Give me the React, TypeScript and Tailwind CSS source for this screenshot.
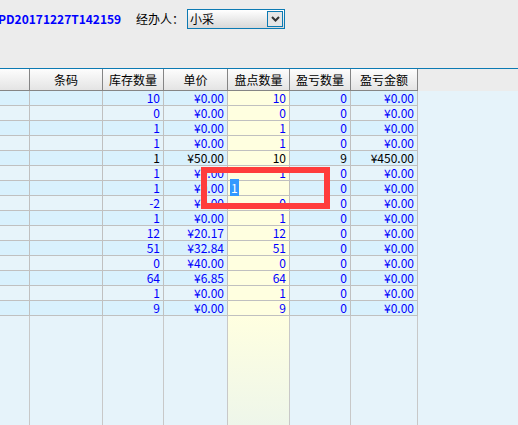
import React from "react";

type Row = { stock: string; price: string; count: string; diff: string; amount: string; dark?: boolean; editing?: boolean };

const ROWS: Row[] = [
  { stock: "10", price: "¥0.00", count: "10", diff: "0", amount: "¥0.00" },
  { stock: "0", price: "¥0.00", count: "0", diff: "0", amount: "¥0.00" },
  { stock: "1", price: "¥0.00", count: "1", diff: "0", amount: "¥0.00" },
  { stock: "1", price: "¥0.00", count: "1", diff: "0", amount: "¥0.00" },
  { stock: "1", price: "¥50.00", count: "10", diff: "9", amount: "¥450.00", dark: true },
  { stock: "1", price: "¥0.00", count: "1", diff: "0", amount: "¥0.00" },
  { stock: "1", price: "¥0.00", count: "1", diff: "0", amount: "¥0.00", editing: true },
  { stock: "-2", price: "¥0.00", count: "0", diff: "0", amount: "¥0.00" },
  { stock: "1", price: "¥0.00", count: "1", diff: "0", amount: "¥0.00" },
  { stock: "12", price: "¥20.17", count: "12", diff: "0", amount: "¥0.00" },
  { stock: "51", price: "¥32.84", count: "51", diff: "0", amount: "¥0.00" },
  { stock: "0", price: "¥40.00", count: "0", diff: "0", amount: "¥0.00" },
  { stock: "64", price: "¥6.85", count: "64", diff: "0", amount: "¥0.00" },
  { stock: "1", price: "¥0.00", count: "1", diff: "0", amount: "¥0.00" },
  { stock: "9", price: "¥0.00", count: "9", diff: "0", amount: "¥0.00" },
];

const FONT = { fontFamily: '"Noto Sans CJK SC", "Noto Sans", sans-serif' };

function HeadCell({ w, children }: { w: string; children?: React.ReactNode }) {
  return (
    <div className={`${w} flex items-center justify-center border-r border-[#858585] bg-gradient-to-b from-[#fdfdfd] to-[#e4e4e4] text-[12px] text-black`}>
      {children}
    </div>
  );
}

export default function App() {
  return (
    <div className="relative flex h-[425px] w-[518px] flex-col overflow-hidden bg-[#ececec]" style={FONT}>
      {/* top form */}
      <div className="flex h-[68px] items-start pt-[9px]">
        <span className="ml-[-2px] mt-[2px] w-[138px] text-[12px] font-bold leading-[16px] text-[#0000ff]">PD20171227T142159</span>
        <span className="mt-[2px] w-[51px] text-[12px] leading-[16px] text-black">经办人：</span>
        <div className="flex h-[20px] w-[98px] items-center border border-[#0c7ab3] bg-gradient-to-b from-white to-[#d8d8d8] pl-[2px]">
          <span className="flex-1 text-[12px] leading-[14px] text-black">小采</span>
          <div className="mr-px flex h-[16px] w-[16px] items-center justify-center border border-[#0c7ab3] bg-[#e6e6e6]">
            <svg width="9" height="6" viewBox="0 0 9 6">
              <path d="M1 1 L4.5 4.5 L8 1" fill="none" stroke="#333" strokeWidth="2" />
            </svg>
          </div>
        </div>
      </div>

      {/* grid */}
      <div className="flex flex-1 flex-col border-t border-[#0c7ab3]">
        <div className="flex h-[22px] shrink-0">
          <div className="flex border-b border-[#858585]">
            <HeadCell w="w-[30px]" />
            <HeadCell w="w-[73px]">条码</HeadCell>
            <HeadCell w="w-[61px]">库存数量</HeadCell>
            <HeadCell w="w-[64px]">单价</HeadCell>
            <HeadCell w="w-[62px]">盘点数量</HeadCell>
            <HeadCell w="w-[61px]">盈亏数量</HeadCell>
            <HeadCell w="w-[67px]">盈亏金额</HeadCell>
          </div>
          <div className="flex-1 bg-[#ececec]" />
        </div>

        <div className="flex flex-1 flex-col bg-[#e6f3fa]">
          {ROWS.map((r, i) => {
            const bg = i % 2 === 0 ? "bg-[#d9f1fd]" : "bg-[#e7f4fa]";
            const txt = r.dark ? "text-black" : "text-[#0000ff]";
            const base = `border-r border-b border-[#c0c0c0] text-[12px] leading-[14px] ${txt}`;
            const cell = `${base} pr-[3px] text-right`;
            return (
              <div key={i} className="flex h-[15px] shrink-0">
                <div className={`w-[30px] ${bg} ${cell}`} />
                <div className={`w-[73px] ${bg} ${cell}`} />
                <div className={`w-[61px] ${bg} ${cell}`}>{r.stock}</div>
                <div className={`w-[64px] ${bg} ${cell}`}>{r.price}</div>
                {r.editing ? (
                  <div className={`w-[62px] bg-[#ffffe0] ${base} pl-[2px] text-left`}>
                    <span className="bg-[#3399ff] px-px text-white">1</span>
                  </div>
                ) : (
                  <div className={`w-[62px] bg-[#ffffe0] ${cell}`}>{r.count}</div>
                )}
                <div className={`w-[61px] ${bg} ${cell}`}>{r.diff}</div>
                <div className={`w-[67px] ${bg} ${cell}`}>{r.amount}</div>
              </div>
            );
          })}
          <div className="flex flex-1">
            <div className="w-[30px] border-r border-[#c8c8c8]" />
            <div className="w-[73px] border-r border-[#c8c8c8]" />
            <div className="w-[61px] border-r border-[#c8c8c8]" />
            <div className="w-[64px] border-r border-[#c8c8c8]" />
            <div className="w-[62px] border-r border-[#c8c8c8] bg-gradient-to-b from-[#ffffe0] to-[#eef6ea]" />
            <div className="w-[61px] border-r border-[#c8c8c8]" />
            <div className="w-[67px] border-r border-[#c8c8c8]" />
          </div>
        </div>
      </div>

      {/* annotation */}
      <div className="absolute left-[201px] top-[167px] h-[42px] w-[129px] border-[6px] border-[#ff3c3c]" />
    </div>
  );
}
